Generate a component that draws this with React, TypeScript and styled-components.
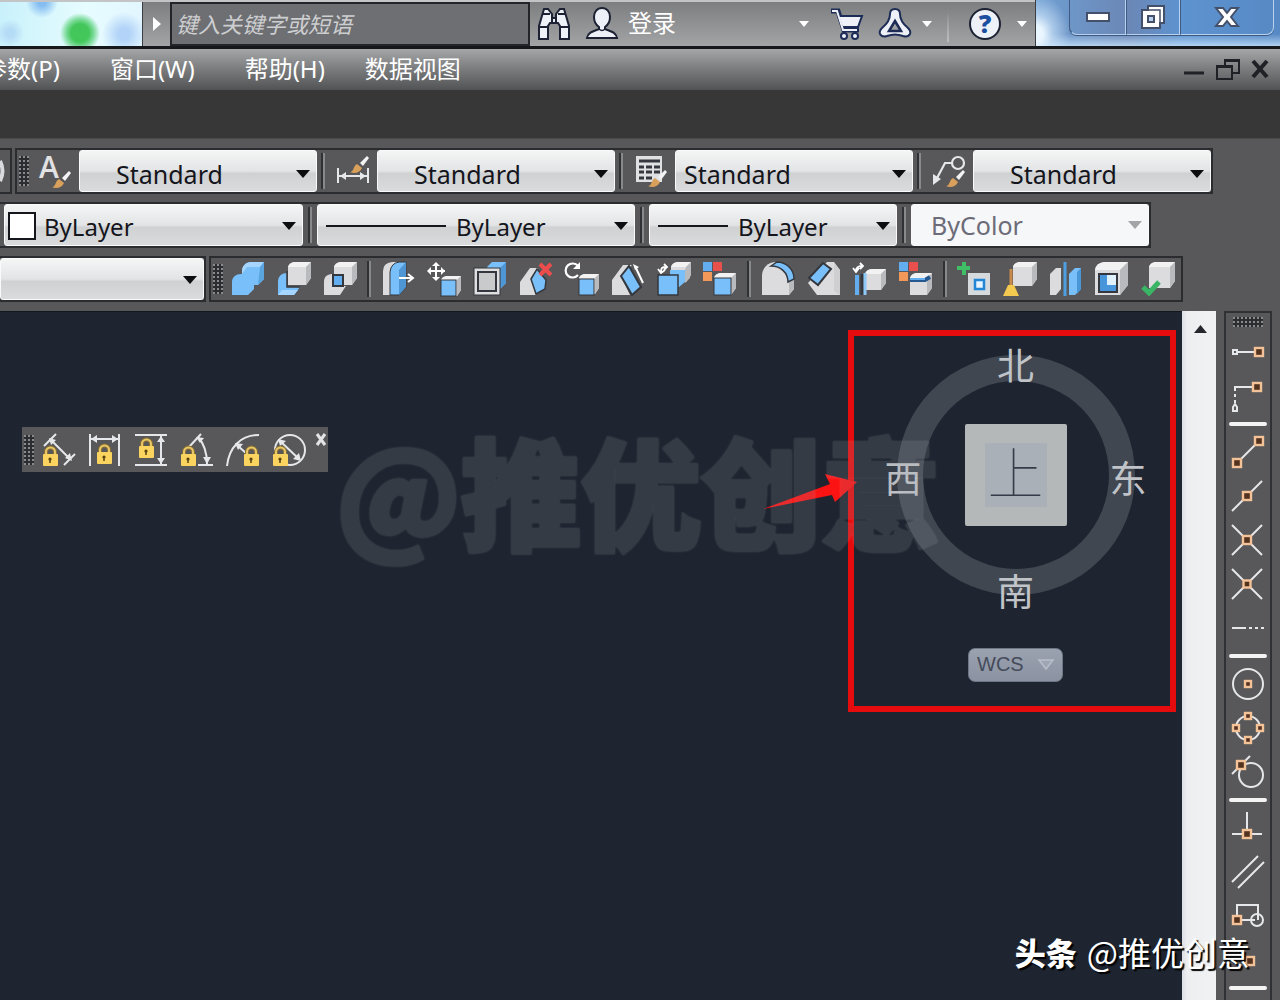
import React from "react";
import styled, { createGlobalStyle, css } from "styled-components";

const CJK = `"Noto Sans CJK SC", "Noto Sans", sans-serif`;
const LATIN = `"Noto Sans", "Noto Sans CJK SC", sans-serif`;

const BLUE = "#79c0fa";
const PALE = "#dcdcde";
const LIGHT = "#f2f2f3";
const SHADE = "#b9babd";
const INK = "#34373d";
const WIRE = "#e6e7ea";
const NODE = "#f3c299";

const GlobalStyle = createGlobalStyle`
  *, *::before, *::after { box-sizing: border-box; }
  body { margin: 0; background: #58585a; font-family: ${CJK}; }
  button { padding: 0; border: 0; background: none; color: inherit; font: inherit; }
  svg { display: block; flex: none; overflow: visible; }
`;

const Shell = styled.div`
  position: relative;
  display: flex;
  flex-direction: column;
  height: 100vh;
  overflow: hidden;
  background: #58585a;
`;

/* ---------- title bar ---------- */

const TitleBar = styled.header`
  display: flex;
  height: 49px;
  flex: none;
  border-top: 2px solid #c3c4c6;
  border-bottom: 3px solid #17181c;
  background: linear-gradient(#7d7e80, #a3a4a6);
`;

const LeftGlass = styled.div`
  width: 143px;
  flex: none;
  border-right: 1px solid #3c3d40;
  background:
    radial-gradient(circle at 80px 31px, #43c75b 9px, #7fdc9d 14px, transparent 20px),
    radial-gradient(circle at 10px 31px, #b5dcf6 4px, transparent 14px),
    radial-gradient(circle at 124px 32px, #b3d4f8 6px, transparent 22px),
    radial-gradient(circle at 42px 0, #85bdf0 4px, transparent 16px),
    linear-gradient(90deg, #c9f1fb, #e6fcff 60%, #e3f6ff);
`;

const ExpandButton = styled.button`
  display: grid;
  place-items: center;
  width: 27px;
`;

const SearchInput = styled.input`
  width: 360px;
  margin: 0;
  padding: 0 4px 2px;
  border: 2px solid #222429;
  border-radius: 0;
  background: #6e6f72;
  color: #fff;
  font: italic 22px ${CJK};
  &::placeholder { color: #cdced0; opacity: 1; }
`;

const BarButton = styled.button<{ $w: number }>`
  display: grid;
  place-items: center;
  width: ${(p) => p.$w}px;
  flex: none;
`;

const SignIn = styled.button`
  padding: 0 2px 4px;
  color: #fff;
  font-size: 24px;
  line-height: 36px;
`;

const Spacer = styled.div`
  flex: 1;
`;

const BarDivider = styled.i`
  width: 2px;
  margin: 10px 12px 4px;
  background: linear-gradient(transparent, #bbbcbe);
`;

const RightGlass = styled.div`
  display: flex;
  align-items: flex-start;
  width: 245px;
  padding-left: 33px;
  border-left: 1px solid #3c3d40;
  margin-top: -2px;
  background:
    radial-gradient(ellipse 34px 40px at 0 34px, #eaf6ff 20%, rgba(214, 234, 252, 0.6) 50%, transparent),
    linear-gradient(180deg, transparent 34px, rgba(205, 232, 255, 0.75) 46px),
    linear-gradient(90deg, #6f9fd2, #6b87b6 38%, #5d93d0 60%, #5789c4);
`;

const WindowButton = styled.button<{ $w: number }>`
  display: grid;
  place-items: center;
  width: ${(p) => p.$w}px;
  height: 35px;
  border: 1px solid #b9d3ee;
  border-top: 0;
  border-left-color: #405a85;
  box-shadow: 0 1px 0 #3d5880;
  &:first-child { border-bottom-left-radius: 8px; }
  &:last-child { border-bottom-right-radius: 8px; }
`;

/* ---------- menu bar ---------- */

const MenuBar = styled.nav`
  display: flex;
  align-items: center;
  height: 41px;
  flex: none;
  padding: 0 5px 2px 0;
  background: linear-gradient(#a5a6a8, #7e7f81 45%, #525355);
`;

const MenuList = styled.div`
  display: flex;
  margin-left: -42px;
`;

const MenuItem = styled.button<{ $tight?: boolean }>`
  padding: 0 ${(p) => (p.$tight ? 15 : 25)}px;
  color: #fff;
  font: 24px/36px ${LATIN};
`;

const DocButton = styled.button`
  display: grid;
  place-items: center;
  width: 34px;
  height: 34px;
  &:last-child { width: 30px; }
`;

const Band = styled.div`
  height: 49px;
  flex: none;
  background: #373738;
  border-bottom: 1px solid #4a4a4c;
`;

/* ---------- toolbars ---------- */

const Toolbars = styled.section`
  display: flex;
  flex-direction: column;
  gap: 8px;
  flex: none;
  padding: 9px 0;
`;

const ToolRow = styled.div`
  display: flex;
  gap: 3px;
`;

const Strip = styled.div<{ $open?: boolean; $inset?: boolean }>`
  display: flex;
  align-items: stretch;
  height: 46px;
  flex: none;
  border: 2px solid #2b2c30;
  ${(p) => p.$open && css`border-left: 0;`}
  ${(p) => p.$inset && css`padding-left: 4px;`}
`;

const Stub = styled(Strip)`
  width: 12px;
  overflow: hidden;
  align-items: center;
`;

const Grip = styled.i<{ $flat?: boolean }>`
  width: ${(p) => (p.$flat ? 30 : 10)}px;
  height: ${(p) => (p.$flat ? 10 : 30)}px;
  margin: ${(p) => (p.$flat ? "4px 4px 0" : "auto 2px")};
  flex: none;
  background:
    radial-gradient(circle at 1px 1px, #8a8b8d 1px, transparent 1px) 0 0 / 4px 4px,
    #2c2d30;
`;

const Rule = styled.i<{ $wide?: boolean }>`
  width: 4px;
  margin: 3px ${(p) => (p.$wide ? 5 : 4)}px;
  flex: none;
  border-left: 2px solid #303135;
  border-right: 2px solid #88898b;
`;

const ToolButton = styled.button<{ $wide?: boolean }>`
  display: grid;
  place-items: center;
  width: ${(p) => (p.$wide ? 48 : 46)}px;
  flex: none;
`;

const ComboBox = styled.div<{ $w: number; $drop: number; $disabled?: boolean }>`
  display: grid;
  width: ${(p) => p.$w}px;
  padding-top: ${(p) => p.$drop}px;
  border: 1px solid #fafafa;
  border-radius: 3px;
  background: ${(p) =>
    p.$disabled ? "#f6f7f8" : "linear-gradient(#f4f5f5, #e3e4e5 50%, #cfd1d2 56%, #dadbdc)"};
  > * { grid-area: 1 / 1; align-self: center; }
`;

const Choice = styled.select<{ $indent: number; $size: number }>`
  appearance: none;
  width: 100%;
  height: 100%;
  padding: 0 24px 0 ${(p) => p.$indent}px;
  border: 0;
  background: transparent;
  color: #14151c;
  font: ${(p) => p.$size}px ${LATIN};
  opacity: 1;
  &:disabled { color: #6c6b78; }
`;

const ComboCaret = styled.svg`
  justify-self: end;
  margin-right: 6px;
  pointer-events: none;
`;

const Swatch = styled.i`
  width: 28px;
  height: 28px;
  margin-left: 3px;
  border: 2px solid #15161b;
  background: #fff;
  pointer-events: none;
`;

const Stroke = styled.i<{ $w: number }>`
  width: ${(p) => p.$w}px;
  height: 2px;
  margin-left: 8px;
  background: #15161b;
  pointer-events: none;
`;

/* ---------- workspace ---------- */

const Workspace = styled.main`
  display: flex;
  flex: 1;
  min-height: 0;
  padding-right: 8px;
  overflow: hidden;
`;

const Canvas = styled.div`
  position: relative;
  flex: 1;
  border-top: 1px solid #12161e;
  background: #1e2530;
`;

const FloatingBar = styled.div`
  position: absolute;
  left: 22px;
  top: 115px;
  display: flex;
  height: 45px;
  width: 306px;
  background: #58585a;
`;

const CloseTool = styled.button`
  align-self: flex-start;
  margin: 6px 0 0 3px;
`;

const Highlight = styled.section`
  position: absolute;
  top: 18px;
  right: 6px;
  display: flex;
  flex-direction: column;
  align-items: center;
  width: 328px;
  height: 382px;
  padding: 10px 0 0 7px;
  border: 6px solid #e60b0c;
`;

const Compass = styled.div`
  display: grid;
  place-items: center;
  width: 262px;
  height: 262px;
  > * { grid-area: 1 / 1; }
`;

const Ring = styled.i`
  width: 238px;
  height: 240px;
  margin-bottom: 5px;
  border: 26px solid #414751;
  border-radius: 50%;
`;

const Direction = styled.button<{ $x: string; $y: string }>`
  justify-self: ${(p) => p.$x};
  align-self: ${(p) => p.$y};
  color: #c0c3c7;
  font-size: 37px;
  font-weight: 400;
  line-height: 36px;
`;

const CubeFace = styled.button`
  display: grid;
  place-items: center;
  width: 102px;
  height: 102px;
  margin-bottom: 5px;
  border-radius: 2px;
  background: #b4b8b9;
`;

const CubeLabel = styled.span`
  width: 62px;
  height: 64px;
  background: #a9b0b8;
  color: #373b48;
  font-size: 56px;
  font-weight: 100;
  line-height: 54px;
`;

const WcsButton = styled.button`
  display: flex;
  align-items: center;
  justify-content: space-between;
  width: 95px;
  height: 34px;
  margin-top: 40px;
  padding: 0 8px 2px;
  border: 1px solid #6f7685;
  border-radius: 7px;
  background: linear-gradient(#9aa1af, #8b92a1);
  color: #454b5a;
  font: 20px "Liberation Sans", sans-serif;
`;

const Arrow = styled.svg`
  position: absolute;
  right: 324px;
  top: 160px;
`;

const Watermark = styled.div`
  position: absolute;
  left: 336px;
  top: 87px;
  color: #9a9fa6;
  opacity: 0.18;
  font-size: 120px;
  font-weight: 900;
  line-height: 180px;
  white-space: nowrap;
  -webkit-text-stroke: 3px #9a9fa6;
  filter: drop-shadow(0 0 1px #fff);
  pointer-events: none;
`;

const ScrollTrack = styled.div`
  width: 34px;
  flex: none;
  background: linear-gradient(90deg, #dcdfe6, #eceef0 15%, #f1f2f3);
`;

const ScrollButton = styled.button`
  display: grid;
  place-items: center;
  width: 36px;
  height: 36px;
`;

const Palette = styled.aside`
  display: flex;
  flex-direction: column;
  align-items: center;
  width: 48px;
  margin-left: 8px;
  flex: none;
  border: 2px solid #303135;
  border-bottom: 0;
`;

const PaletteGrip = styled(Grip)`
  margin-bottom: 3px;
`;

const SnapButton = styled.button`
  display: grid;
  place-items: center;
  width: 44px;
  height: 44px;
  flex: none;
`;

const SnapRule = styled.i`
  width: 38px;
  height: 4px;
  margin: 4px 0;
  flex: none;
  border-radius: 2px;
  background: #f4f4f5;
`;

const Credit = styled.footer`
  position: absolute;
  right: 30px;
  bottom: 24px;
  display: flex;
  align-items: center;
  gap: 10px;
  color: #fff;
  font-size: 33px;
  font-weight: 400;
  line-height: 48px;
  text-shadow: 2px 2px 1px #000;
  pointer-events: none;
`;

const CreditBrand = styled.strong`
  font-size: 31px;
  font-weight: 900;
`;

/* ---------- drawings ---------- */

const Svg = ({ size = 34, children }: { size?: number; children: React.ReactNode }) => (
  <svg width={size} height={size} viewBox="0 0 34 34" fill="none" aria-hidden="true">
    {children}
  </svg>
);

const Caret = ({ w = 10, fill = "#fff" }: { w?: number; fill?: string }) => (
  <svg width={w} height="6" viewBox="0 0 10 6" aria-hidden="true">
    <path d="M0 0h10L5 6z" fill={fill} />
  </svg>
);

type BlockProps = { x: number; y: number; s: number; d?: number; fill?: string };

/* A solid seen from the front with its top and right faces visible. */
const Block = ({ x, y, s, d = 5, fill = PALE }: BlockProps) => {
  const blue = fill === BLUE;
  return (
    <g>
      <path d={`M${x} ${y + d}q1-${d - 1} ${d + 1}-${d}h${s - d - 1}v${s - d - 2}l-${d} ${d + 2}h-${s - d}z`} fill={fill} />
      <path d={`M${x} ${y + d}q1-${d - 1} ${d + 1}-${d}h${s - d - 1}l-${d} ${d}z`} fill={blue ? "#a6d6ff" : LIGHT} />
      <path d={`M${x + s - d} ${y + d}l${d}-${d}v${s - d - 2}l-${d} ${d + 2}z`} fill={blue ? "#5aa4e0" : SHADE} />
    </g>
  );
};

const Brush = ({ x, y }: { x: number; y: number }) => (
  <g transform={`translate(${x} ${y})`}>
    <path d="M10 7L17 0l2 2-6 8z" fill="#f3f3f4" />
    <path d="M0 16c4 0 3-6 7-8l5 4c-2 5-8 6-12 4z" fill="#d9a05c" />
  </g>
);

const Squares = () => (
  <g>
    <rect x="0" y="0" width="9" height="9" fill="#62aef0" />
    <rect x="10" y="0" width="9" height="9" fill="#e8504d" />
    <rect x="0" y="10" width="9" height="9" fill="#f2995a" />
  </g>
);

const textStyle = (
  <Svg>
    <text x="1" y="24" fill="#e2e2e4" fontFamily="Open Sans, sans-serif" fontSize="30" fontWeight="600">A</text>
    <Brush x={14} y={17} />
  </Svg>
);
const dimStyle = (
  <Svg>
    <path d="M2 14v15M32 14v15M3 22h28" stroke={WIRE} strokeWidth="2" />
    <path d="M4 22l6-4v8zM30 22l-6-4v8z" fill={WIRE} />
    <Brush x={14} y={2} />
  </Svg>
);
const tableStyle = (
  <Svg>
    <rect x="2" y="2" width="26" height="26" fill="#dfe0e2" />
    <path d="M5 7h21" stroke={INK} strokeWidth="3" />
    <path d="M5 13h5M12 13h6M20 13h6M5 18h5M12 18h6M20 18h6M5 24h5M12 24h6" stroke={INK} strokeWidth="3" />
    <Brush x={14} y={16} />
  </Svg>
);
const leaderStyle = (
  <Svg>
    <circle cx="26" cy="9" r="6" stroke={WIRE} strokeWidth="2.2" />
    <path d="M20 9h-7L4 26" stroke={WIRE} strokeWidth="2.2" />
    <path d="M1 31V20l8 5z" fill={WIRE} />
    <Brush x={14} y={16} />
  </Svg>
);

const solids1: [string, React.ReactNode][] = [
  ["并集", <Svg>
    <path d="M1 33V20c0-5 4-8 9-8h1V9c0-5 4-9 9-9h13v17l-6 6h-4v4l-6 6z" fill={BLUE} />
    <path d="M11 12V9c0-5 4-9 9-9h13l-4 5H16z" fill="#a6d6ff" />
    <path d="M29 5l4-5v17l-6 6z" fill="#5aa4e0" /></Svg>],
  ["差集", <Svg>
    <path d="M1 33V20c0-6 4-9 9-9v14h13l-6 8z" fill={BLUE} /><path d="M1 33l4-5h16l-4 5z" fill="#a6d6ff" />
    <Block x={11} y={0} s={23} /><path d="M10 9v16h13" stroke={INK} strokeWidth="1.5" /></Svg>],
  ["交集", <Svg>
    <Block x={11} y={0} s={23} /><path d="M1 33V20c0-6 4-8 9-8v12h13l-6 9z" fill={PALE} />
    <rect x="10" y="13" width="10" height="11" fill="#62aef0" stroke={INK} strokeWidth="2" /></Svg>],
];
const solids2: [string, React.ReactNode][] = [
  ["拉伸面", <Svg>
    <path d="M2 33V9q0-8 9-9h6l-7 7v26z" fill={PALE} />
    <path d="M9 33V10q1-9 9-10h7v25l-7 8z" fill={BLUE} stroke={INK} /><path d="M18 8l7-8v25l-7 8z" fill="#4f97d4" />
    <path d="M18 16h13M27 12l5 4-5 4" stroke="#fff" strokeWidth="2" /></Svg>],
  ["移动面", <Svg>
    <path d="M9 1v17M1 9h17" stroke="#fff" strokeWidth="2" /><path d="M9 0l4 4H5zM9 19l4-4H5zM0 9l4-4v8zM18 9l-4-4v8z" fill="#fff" />
    <Block x={14} y={14} s={20} d={4} /><rect x="14" y="18" width="15" height="16" fill={BLUE} stroke={INK} /></Svg>],
  ["偏移面", <Svg>
    <path d="M14 5l5-5h14v21l-7 7z" fill={BLUE} /><path d="M26 7l7-7v21l-7 7z" fill="#4f97d4" />
    <rect x="1" y="6" width="26" height="27" fill="#dfdfe1" stroke={INK} /><rect x="5" y="10" width="18" height="19" fill="#c9cacb" stroke={INK} strokeWidth="2" /></Svg>],
  ["删除面", <Svg>
    <path d="M1 33V20L11 6h8l-7 10 5 17z" fill={PALE} /><path d="M12 17l6-10 9 11-1 9-9 5z" fill={BLUE} stroke={INK} strokeWidth="1.5" />
    <path d="M21 2l11 11M32 2L21 13" stroke="#ec4c4b" strokeWidth="4" /></Svg>],
  ["旋转面", <Svg>
    <path d="M13 13a7 7 0 1 1 0-9" stroke="#fff" strokeWidth="2.2" /><path d="M15 0v7H8z" fill="#fff" />
    <Block x={14} y={12} s={20} d={4} /><rect x="14" y="17" width="15" height="16" fill={BLUE} stroke={INK} /></Svg>],
  ["倾斜面", <Svg>
    <path d="M1 33V18L12 3h9L10 14l9 19z" fill={PALE} /><path d="M10 14l8-10 12 21-9 8z" fill={BLUE} stroke={INK} strokeWidth="2" />
    <path d="M24 4l8 17" stroke="#fff" strokeWidth="2" /><path d="M22 2l6 3-4 3z" fill="#fff" /></Svg>],
  ["复制面", <Svg>
    <Block x={14} y={0} s={20} /><path d="M13 8h15v12l-6 5h-9z" fill={BLUE} /><path d="M28 7l5-5v14l-5 5z" fill={SHADE} />
    <rect x="1" y="13" width="20" height="20" fill={BLUE} stroke={INK} strokeWidth="1.5" />
    <path d="M4 10c0-4 1-5 5-5M7 2l3 3-3 3M1 7l3 4 4-3" stroke="#fff" strokeWidth="1.8" /></Svg>],
  ["着色面", <Svg><Squares /><Block x={11} y={11} s={22} d={5} /><rect x="11" y="16" width="17" height="17" fill={BLUE} stroke={INK} /></Svg>],
];
const solids3: [string, React.ReactNode][] = [
  ["圆角边", <Svg>
    <path d="M1 33V14C1 6 7 0 15 0c11 0 18 8 18 18v9l-5 6z" fill={PALE} /><path d="M28 20l5-3v10l-5 6z" fill={SHADE} />
    <path d="M10 4l6-4c9 0 17 7 17 17l-6 3c0-9-7-16-17-16z" fill={BLUE} stroke={INK} strokeWidth="1.5" /></Svg>],
  ["倒角边", <Svg>
    <path d="M1 21L20 0h7l6 8v25H10z" fill={PALE} /><path d="M27 2l6 6v25l-6-4z" fill="#cfcfd1" />
    <path d="M2 16L16 1l8 6-13 16z" fill={BLUE} stroke={INK} strokeWidth="2" /></Svg>],
  ["复制边", <Svg>
    <path d="M4 13v20" stroke="#62aef0" strokeWidth="4" /><path d="M9 12v21" stroke={INK} strokeWidth="3" />
    <Block x={12} y={7} s={21} /><path d="M12 11v22" stroke="#8ec8f6" strokeWidth="3" />
    <path d="M3 9c0-4 2-5 7-5M7 1l3 3-3 3M0 6l3 4 3-4" stroke="#fff" strokeWidth="1.8" /></Svg>],
  ["着色边", <Svg><Squares /><Block x={11} y={11} s={22} d={5} /><path d="M11 18h15l5-3" stroke="#24588f" strokeWidth="4" /><path d="M11 17h15" stroke="#62aef0" strokeWidth="2" /></Svg>],
];
const solids4: [string, React.ReactNode][] = [
  ["压印", <Svg>
    <path d="M7 0v13M0 6h13" stroke="#3fc066" strokeWidth="4" />
    <rect x="11" y="11" width="22" height="22" fill="#d7dadd" /><rect x="18" y="18" width="9" height="9" fill="#e8f4ff" stroke="#2186d6" strokeWidth="2.5" /></Svg>],
  ["清除", <Svg>
    <Block x={10} y={0} s={24} /><path d="M8 7v17" stroke="#c98a4a" strokeWidth="3" /><path d="M5 23h6l5 11H0z" fill="#f3c94f" /></Svg>],
  ["分割", <Svg>
    <path d="M1 33V12l6-6h5v21l-5 6z" fill={PALE} /><path d="M16 0v34" stroke="#4f9fe0" strokeWidth="3" />
    <path d="M20 33V12l6-6h6v21l-6 6z" fill={BLUE} /><path d="M28 10l4-4v21l-4 5z" fill="#4a97d8" /></Svg>],
  ["抽壳", <Svg>
    <Block x={0} y={0} s={33} d={8} /><rect x="4" y="12" width="18" height="18" fill="#dff0ff" stroke={INK} strokeWidth="2" />
    <path d="M5 13h7v10h9v6H5z" fill="#4796dc" /></Svg>],
  ["检查", <Svg><Block x={8} y={0} s={26} /><path d="M2 25l6 6 10-11" stroke="#39b565" strokeWidth="5" /></Svg>],
];

const Lock = ({ x, y }: { x: number; y: number }) => (
  <g transform={`translate(${x} ${y})`}>
    <path d="M3 9V6a4 4 0 0 1 9 0v3" stroke="#8a7135" strokeWidth="4" />
    <path d="M3 9V6a4 4 0 0 1 9 0v3" stroke="#e9c766" strokeWidth="2" />
    <rect x="0" y="8" width="15" height="12" rx="1" fill="#fbd35f" />
    <circle cx="7" cy="13" r="1.600" fill="#584312" />
    <path d="M7 13v4" stroke="#584312" strokeWidth="1.500" />
  </g>
);

const dimTools: [string, React.ReactNode][] = [
  ["对齐", <Svg><path d="M2 13L14 1M22 32l11-11M9 7l18 18" stroke={WIRE} strokeWidth="2" /><path d="M7 5l7 2-5 5zM30 28l-2-8-5 5z" fill={WIRE} /><Lock x={1} y={13} /></Svg>],
  ["水平", <Svg><path d="M2 1v32M31 1v32M3 6h27" stroke={WIRE} strokeWidth="2" /><path d="M3 6l6-4v8zM30 6l-6-4v8z" fill={WIRE} /><Lock x={9} y={11} /></Svg>],
  ["竖直", <Svg><path d="M1 2h32M1 32h32M27 3v28" stroke={WIRE} strokeWidth="2" /><path d="M27 3l4 6h-8zM27 31l4-6h-8z" fill={WIRE} /><Lock x={5} y={5} /></Svg>],
  ["角度", <Svg><path d="M9 14L21 1M18 32h15M18 4q9 10 9 27" stroke={WIRE} strokeWidth="2" /><path d="M16 4l8 1-4 5zM27 31l4-7h-8z" fill={WIRE} /><Lock x={1} y={13} /></Svg>],
  ["半径", <Svg><path d="M1 33C3 15 14 2 33 2M11 12l10 9" stroke={WIRE} strokeWidth="2" /><path d="M9 10l8 1-5 6z" fill={WIRE} /><Lock x={18} y={13} /></Svg>],
  ["直径", <Svg><circle cx="18" cy="17" r="15" stroke={WIRE} strokeWidth="2" /><path d="M8 8l19 18" stroke={WIRE} strokeWidth="2" /><path d="M6 6l8 2-6 5zM29 28l-2-8-6 6z" fill={WIRE} /><Lock x={1} y={13} /></Svg>],
];

const Node = ({ x, y, s = 8 }: { x: number; y: number; s?: number }) => (
  <rect x={x - s / 2} y={y - s / 2} width={s} height={s} fill="#54331e" stroke={NODE} strokeWidth="2.400" />
);

const wire = { stroke: WIRE, strokeWidth: 2 };

const snaps: [string, React.ReactNode][][] = [
  [
    ["临时追踪点", <Svg><path d="M5 17h18" {...wire} /><rect x="2" y="15" width="4" height="4" fill="#58585a" {...wire} /><Node x={28} y={17} /></Svg>],
    ["捕捉自", <Svg><path d="M4 12V8h18" {...wire} /><path d="M4 15v9" {...wire} strokeDasharray="3 3" /><path d="M2 32v-4l2-3 2 3v4z" {...wire} /><Node x={26} y={8} /></Svg>],
  ],
  [
    ["端点", <Svg><path d="M6 28L28 6" {...wire} /><Node x={28} y={6} /><Node x={6} y={28} /></Svg>],
    ["中点", <Svg><path d="M1 32L31 2" {...wire} /><Node x={16} y={17} /></Svg>],
    ["交点", <Svg><path d="M1 32L31 2M1 2l30 30" {...wire} /><Node x={16} y={17} /></Svg>],
    ["外观交点", <Svg><path d="M1 32L31 2M1 2l30 30" {...wire} /><Node x={16} y={17} s={7} /></Svg>],
    ["延长线", <Svg><path d="M1 17h14M18 17h3M24 17h3M30 17h3" {...wire} /></Svg>],
  ],
  [
    ["圆心", <Svg><circle cx="17" cy="17" r="15" {...wire} /><Node x={17} y={17} s={6} /></Svg>],
    ["象限点", <Svg><circle cx="17" cy="17" r="12" {...wire} /><Node x={17} y={5} s={6} /><Node x={5} y={17} s={6} /><Node x={29} y={17} s={6} /><Node x={17} y={29} s={6} /></Svg>],
    ["切点", <Svg><circle cx="20" cy="20" r="12" {...wire} /><path d="M1 19L19 1" {...wire} /><Node x={10} y={10} /></Svg>],
  ],
  [
    ["垂足", <Svg><path d="M16 1v20M1 23h30" {...wire} /><Node x={16} y={23} /></Svg>],
    ["平行线", <Svg><path d="M1 27L27 1M7 33L33 7" {...wire} /></Svg>],
    ["插入点", <Svg><path d="M6 18V6h21v15M6 21h18" {...wire} /><circle cx="26" cy="21" r="6" {...wire} /><Node x={6} y={21} /></Svg>],
    ["节点", <Svg><Node x={19} y={18} /></Svg>],
  ],
];

/* ---------- composed parts ---------- */

type ComboProps = {
  label: string;
  value?: string;
  width: number;
  indent?: number;
  size?: number;
  drop?: number;
  disabled?: boolean;
  children?: React.ReactNode;
};

const Combo = ({ label, value = "", width, indent = 9, size = 25, drop = 2, disabled, children }: ComboProps) => (
  <ComboBox $w={width} $drop={drop} $disabled={disabled}>
    <Choice aria-label={label} $indent={indent} $size={size} disabled={disabled}>
      <option>{value}</option>
    </Choice>
    {children}
    <ComboCaret width="14" height="8" viewBox="0 0 14 8">
      <path d="M0 0h14L7 8z" fill={disabled ? "#a3a4a8" : "#0c0d10"} />
    </ComboCaret>
  </ComboBox>
);

const Tools = ({ items }: { items: [string, React.ReactNode][] }) => (
  <>
    {items.map(([name, icon]) => (
      <ToolButton key={name} aria-label={name}>{icon}</ToolButton>
    ))}
  </>
);

const glyph = { fill: "#eef1f8", stroke: "#1c2233", strokeWidth: 2 };

export default function App() {
  return (
    <Shell>
      <GlobalStyle />
      <TitleBar>
        <LeftGlass />
        <ExpandButton aria-label="展开">
          <svg width="8" height="14" viewBox="0 0 8 14"><path d="M0 0l8 7-8 7z" fill="#fff" /></svg>
        </ExpandButton>
        <SearchInput aria-label="搜索" placeholder="键入关键字或短语" />
        <BarButton $w={48} aria-label="查找">
          <Svg>
            <path d="M7 2h4l4 5v4h4V7l4-5h4l5 17v13h-9V19l-2-3h-8l-2 3v13H2V19z" {...glyph} />
            <path d="M2 20h9M23 20h9M6 7h7M21 7h7M15 9v7M19 9v7" stroke="#1c2233" strokeWidth="2" />
          </Svg>
        </BarButton>
        <BarButton $w={48} aria-label="用户">
          <Svg>
            <path d="M17 1c5 0 8 4 8 9 0 4-2 8-5 10v2c5 2 11 3 12 9H2c1-6 7-7 12-9v-2c-3-2-5-6-5-10 0-5 3-9 8-9z" {...glyph} />
            <path d="M14 22q3 3 6 0" stroke="#1c2233" strokeWidth="1.5" />
          </Svg>
        </BarButton>
        <SignIn>登录</SignIn>
        <Spacer />
        <BarButton $w={38} aria-label="登录选项"><Caret /></BarButton>
        <BarButton $w={48} aria-label="购物车">
          <Svg>
            <path d="M1 4h7l6 19h15" stroke="#1d2c56" strokeWidth="5" />
            <path d="M8 9h24l-4 11H12z" {...glyph} stroke="#1d2c56" />
            <path d="M2 4h5l6 19h14" stroke="#eef1f8" strokeWidth="2" />
            <circle cx="14" cy="29" r="3" {...glyph} stroke="#1d2c56" /><circle cx="25" cy="29" r="3" {...glyph} stroke="#1d2c56" />
          </Svg>
        </BarButton>
        <BarButton $w={48} aria-label="应用">
          <Svg>
            <path d="M17 2c3 0 5 2 5 5 0 6 3 10 8 14 5 5 1 10-5 8-5-2-11-2-16 0-6 2-10-3-5-8 5-4 8-8 8-14 0-3 2-5 5-5z" {...glyph} stroke="#1d2c56" />
            <path d="M17 14l6 10H11z" fill="#a0a1a4" stroke="#1d2c56" strokeWidth="2.500" />
          </Svg>
        </BarButton>
        <BarButton $w={16} aria-label="应用选项"><Caret /></BarButton>
        <BarDivider />
        <BarButton $w={48} aria-label="帮助">
          <Svg>
            <circle cx="17" cy="17" r="15" {...glyph} />
            <text x="17" y="26" textAnchor="middle" fill="#1d4fa0" fontFamily="Open Sans, sans-serif" fontSize="25" fontWeight="800">?</text>
          </Svg>
        </BarButton>
        <BarButton $w={26} aria-label="帮助选项"><Caret /></BarButton>
        <RightGlass>
          <WindowButton $w={57} aria-label="最小化">
            <svg width="26" height="12" viewBox="0 0 26 12"><rect x="2" y="2" width="22" height="8" fill="#fff" stroke="#44506a" strokeWidth="2" /></svg>
          </WindowButton>
          <WindowButton $w={54} aria-label="还原">
            <svg width="26" height="26" viewBox="0 0 26 26">
              <path d="M8 2h16v17h-4v5H2V6h6z" fill="#fff" stroke="#44506a" strokeWidth="2" />
              <path d="M9 6h11v13" stroke="#44506a" strokeWidth="1.500" fill="none" />
              <rect x="8" y="12" width="6" height="6" fill="#b9d0ec" stroke="#44506a" strokeWidth="2" />
            </svg>
          </WindowButton>
          <WindowButton $w={94} aria-label="关闭">
            <svg width="26" height="22" viewBox="0 0 26 22"><path d="M2 2h7l4 5 4-5h7l-7 9 7 9h-7l-4-5-4 5H2l7-9z" fill="#fff" stroke="#44506a" strokeWidth="2" /></svg>
          </WindowButton>
        </RightGlass>
      </TitleBar>

      <MenuBar>
        <MenuList>
          <MenuItem>参数(P)</MenuItem>
          <MenuItem>窗口(W)</MenuItem>
          <MenuItem>帮助(H)</MenuItem>
          <MenuItem $tight>数据视图</MenuItem>
        </MenuList>
        <Spacer />
        <DocButton aria-label="最小化文档">
          <svg width="20" height="20" viewBox="0 0 20 20"><path d="M0 14h20" stroke="#202126" strokeWidth="3" /></svg>
        </DocButton>
        <DocButton aria-label="还原文档">
          <svg width="24" height="22" viewBox="0 0 24 22" fill="none"><path d="M9 7V2h14v13h-6M9 3h14" stroke="#202126" strokeWidth="2" /><path d="M1 8h15v13H1zM1 9h15" stroke="#202126" strokeWidth="2" /></svg>
        </DocButton>
        <DocButton aria-label="关闭文档">
          <svg width="18" height="18" viewBox="0 0 18 18"><path d="M2 1l14 16M16 1L2 17" stroke="#202126" strokeWidth="4" /></svg>
        </DocButton>
      </MenuBar>
      <Band />

      <Toolbars>
        <ToolRow>
          <Stub $open>
            <svg width="6" height="24" viewBox="0 0 6 24"><path d="M0 2q5 10 0 20" stroke="#d8dade" strokeWidth="4" fill="none" /></svg>
          </Stub>
          <Strip>
            <Grip />
            <ToolButton $wide aria-label="文字样式">{textStyle}</ToolButton>
            <Combo label="文字样式" value="Standard" width={238} indent={36} drop={5} />
            <Rule />
            <ToolButton $wide aria-label="标注样式">{dimStyle}</ToolButton>
            <Combo label="标注样式" value="Standard" width={238} indent={36} drop={5} />
            <Rule />
            <ToolButton $wide aria-label="表格样式">{tableStyle}</ToolButton>
            <Combo label="表格样式" value="Standard" width={238} indent={8} drop={5} />
            <Rule />
            <ToolButton $wide aria-label="多重引线样式">{leaderStyle}</ToolButton>
            <Combo label="多重引线样式" value="Standard" width={238} indent={36} drop={5} />
          </Strip>
        </ToolRow>
        <ToolRow>
          <Strip $open $inset>
            <Combo label="颜色" value="ByLayer" width={299} indent={39} size={24}><Swatch /></Combo>
            <Rule $wide />
            <Combo label="线型" value="ByLayer" width={318} indent={138} size={24}><Stroke $w={120} /></Combo>
            <Rule $wide />
            <Combo label="线宽" value="ByLayer" width={248} indent={88} size={24}><Stroke $w={70} /></Combo>
            <Rule $wide />
            <Combo label="打印样式" value="ByColor" width={238} indent={19} drop={0} disabled />
          </Strip>
        </ToolRow>
        <ToolRow>
          <Strip $open>
            <Combo label="视图" width={204} />
          </Strip>
          <Strip>
            <Grip />
            <Tools items={solids1} />
            <Rule />
            <Tools items={solids2} />
            <Rule />
            <Tools items={solids3} />
            <Rule />
            <Tools items={solids4} />
          </Strip>
        </ToolRow>
      </Toolbars>

      <Workspace>
        <Canvas>
          <FloatingBar>
            <Grip />
            <Tools items={dimTools} />
            <CloseTool aria-label="关闭工具栏">
              <svg width="12" height="13" viewBox="0 0 12 13"><path d="M2 1l8 11M10 1L2 12" stroke="#e3e4e6" strokeWidth="3" /></svg>
            </CloseTool>
          </FloatingBar>
          <Highlight>
            <Compass>
              <Ring />
              <Direction $x="center" $y="start">北</Direction>
              <Direction $x="start" $y="center">西</Direction>
              <CubeFace><CubeLabel>上</CubeLabel></CubeFace>
              <Direction $x="end" $y="center">东</Direction>
              <Direction $x="center" $y="end">南</Direction>
            </Compass>
            <WcsButton>
              WCS
              <svg width="16" height="11" viewBox="0 0 16 11"><path d="M1 1h14L8 10z" fill="#9fa6b3" stroke="#b9bfca" strokeWidth="1.500" /></svg>
            </WcsButton>
          </Highlight>
          <Arrow width="96" height="38" viewBox="0 0 96 38">
            <path d="M1 37l67-25-5-10 32 8-22 20-3-7z" fill="#fb1212" />
          </Arrow>
          <Watermark>@推优创意</Watermark>
        </Canvas>
        <ScrollTrack>
          <ScrollButton aria-label="向上滚动">
            <svg width="13" height="8" viewBox="0 0 13 8"><path d="M0 8l6.500-8L13 8z" fill="#26272c" /></svg>
          </ScrollButton>
        </ScrollTrack>
        <Palette>
          <PaletteGrip $flat />
          {snaps.map((group, i) => (
            <React.Fragment key={i}>
              {group.map(([name, icon]) => (
                <SnapButton key={name} aria-label={name}>{icon}</SnapButton>
              ))}
              <SnapRule />
            </React.Fragment>
          ))}
        </Palette>
      </Workspace>
      <Credit>
        <CreditBrand>头条</CreditBrand>
        <span>@推优创意</span>
      </Credit>
    </Shell>
  );
}
